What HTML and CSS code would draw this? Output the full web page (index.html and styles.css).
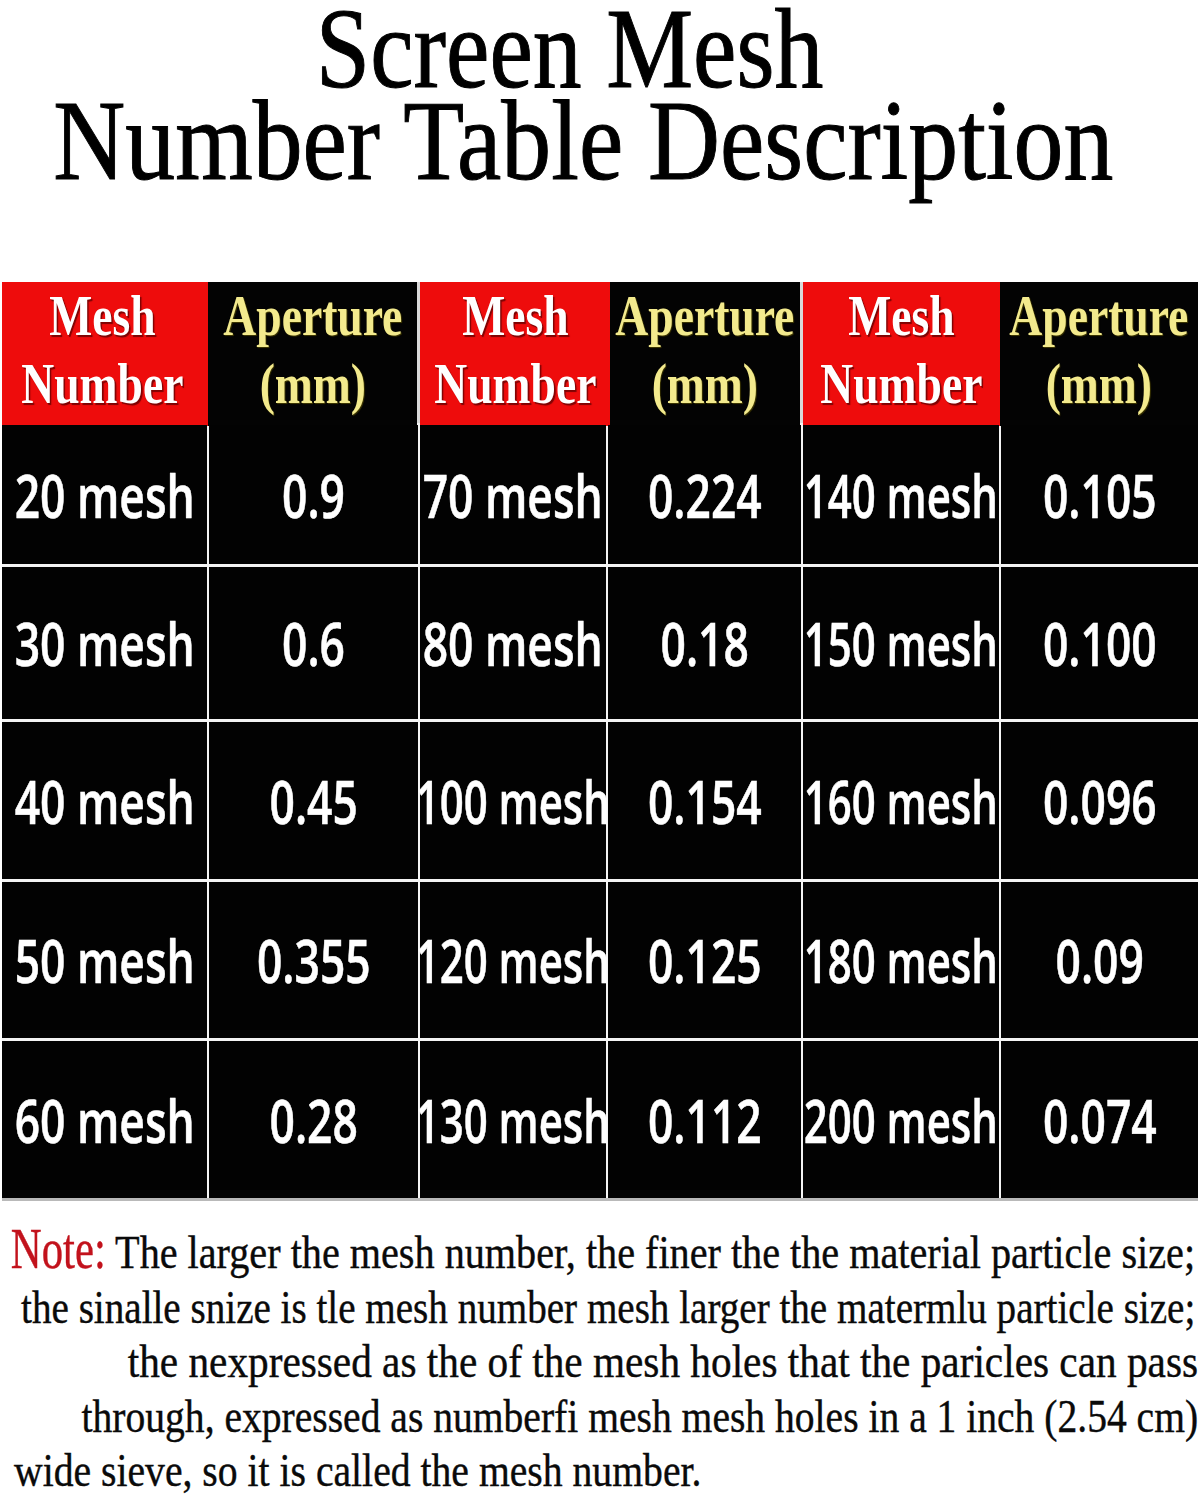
FILE: index.html
```html
<!DOCTYPE html>
<html lang="en">
<head>
<meta charset="utf-8">
<title>Screen Mesh Number Table Description</title>
<link rel="stylesheet" href="styles.css">
</head>
<body>
<div class="page">
  <h1 class="title">
    <span class="title-line t1"><span class="fit-title">Screen Mesh</span></span>
    <span class="title-line t2"><span class="fit-title">Number Table Description</span></span>
  </h1>

  <div class="mesh-table">
    <div class="thead">
      <div class="th red first"><span class="hfit">Mesh<br>Number</span></div>
      <div class="th dark"><span class="hfit">Aperture<br>(mm)</span></div>
      <div class="th red group-start"><span class="hfit">Mesh<br>Number</span></div>
      <div class="th dark"><span class="hfit">Aperture<br>(mm)</span></div>
      <div class="th red group-start"><span class="hfit">Mesh<br>Number</span></div>
      <div class="th dark"><span class="hfit">Aperture<br>(mm)</span></div>
    </div>
    <div class="tbody">
      <div class="td"><span class="bfit">20 mesh</span></div>
      <div class="td"><span class="bfit">0.9</span></div>
      <div class="td"><span class="bfit">70 mesh</span></div>
      <div class="td"><span class="bfit">0.224</span></div>
      <div class="td"><span class="bfit wide">140 mesh</span></div>
      <div class="td"><span class="bfit">0.105</span></div>

      <div class="td"><span class="bfit">30 mesh</span></div>
      <div class="td"><span class="bfit">0.6</span></div>
      <div class="td"><span class="bfit">80 mesh</span></div>
      <div class="td"><span class="bfit">0.18</span></div>
      <div class="td"><span class="bfit wide">150 mesh</span></div>
      <div class="td"><span class="bfit">0.100</span></div>

      <div class="td"><span class="bfit">40 mesh</span></div>
      <div class="td"><span class="bfit">0.45</span></div>
      <div class="td"><span class="bfit wide">100 mesh</span></div>
      <div class="td"><span class="bfit">0.154</span></div>
      <div class="td"><span class="bfit wide">160 mesh</span></div>
      <div class="td"><span class="bfit">0.096</span></div>

      <div class="td"><span class="bfit">50 mesh</span></div>
      <div class="td"><span class="bfit">0.355</span></div>
      <div class="td"><span class="bfit wide">120 mesh</span></div>
      <div class="td"><span class="bfit">0.125</span></div>
      <div class="td"><span class="bfit wide">180 mesh</span></div>
      <div class="td"><span class="bfit">0.09</span></div>

      <div class="td"><span class="bfit">60 mesh</span></div>
      <div class="td"><span class="bfit">0.28</span></div>
      <div class="td"><span class="bfit wide">130 mesh</span></div>
      <div class="td"><span class="bfit">0.112</span></div>
      <div class="td"><span class="bfit wide">200 mesh</span></div>
      <div class="td"><span class="bfit">0.074</span></div>
    </div>
  </div>

  <div class="note">
    <p class="nl nl-right l1"><span class="fit"><span class="note-label">Note:</span> The larger the mesh number, the finer the the material particle size;</span></p>
    <p class="nl nl-right l2"><span class="fit">the sinalle snize is tle mesh number mesh larger the matermlu particle size;</span></p>
    <p class="nl nl-right l3"><span class="fit">the nexpressed as the of the mesh holes that the paricles can pass</span></p>
    <p class="nl nl-right l4"><span class="fit">through, expressed as numberfi mesh mesh holes in a 1 inch (2.54 cm)</span></p>
    <p class="nl nl-left l5"><span class="fit">wide sieve, so it is called the mesh number.</span></p>
  </div>
</div>
</body>
</html>
```

FILE: styles.css
```css
html, body {
  margin: 0;
  padding: 0;
  background: #ffffff;
}

.page {
  width: 1200px;
  height: 1500px;
  overflow: hidden;
  background: #ffffff;
}

/* ---------- Title ---------- */
.title {
  margin: 0;
  padding-top: 3px;
  box-sizing: border-box;
  font-family: "Liberation Serif", "Times New Roman", serif;
  font-weight: 400;
  font-size: 115px;
  line-height: 92px;
  color: #000;
  height: 282px;
}

.title-line {
  display: flex;
  justify-content: center;
  white-space: nowrap;
}

.t1 { padding-right: 60px; }
.t2 { padding-right: 34px; }

.fit-title {
  display: inline-block;
  flex: none;
  transform-origin: center;
  -webkit-text-stroke: 1px #000;
}

.t1 .fit-title { transform: scaleX(0.85); }
.t2 .fit-title { transform: scaleX(0.867); }

/* ---------- Table ---------- */
.mesh-table {
  margin: 0 2px;
  width: 1196px;
}

.thead {
  display: grid;
  grid-template-columns: 206px 209px 193px 190px 200px 198px;
  height: 141px;
  background: #d9d9d9;
}

.th {
  display: flex;
  align-items: center;
  justify-content: center;
  font-family: "Liberation Serif", "Times New Roman", serif;
  font-weight: 700;
  font-size: 57px;
  line-height: 68px;
  text-align: center;
  padding-bottom: 8px;
  box-sizing: border-box;
}

.th.first {
  padding-right: 6px;
}

.th.group-start {
  margin-left: 3px;
}

.th.red {
  background: #ee0c0c;
  color: #ffffff;
  text-shadow: 2px 2px 1px rgba(90, 0, 0, 0.75);
}

.th.dark {
  background: #030303;
  color: #f3ea8d;
  text-shadow: 1px 1px 1px rgba(90, 80, 0, 0.7);
}

.hfit {
  display: inline-block;
  white-space: nowrap;
  transform: scaleX(0.8);
  transform-origin: center;
}

.tbody {
  display: grid;
  grid-template-columns: 205px 209px 186px 193px 196px 197px;
  grid-template-rows: 139px 152px 157px 156px 157px;
  column-gap: 2px;
  row-gap: 3px;
  background: #f4f4f4;
  border-top: 2px solid #f4f4f4;
  border-bottom: 3px solid #b9b9b9;
}

.td {
  background: #020202;
  color: #ffffff;
  display: flex;
  align-items: center;
  justify-content: center;
  font-family: "Open Sans", "DejaVu Sans", sans-serif;
  font-weight: 600;
  font-size: 60px;
  line-height: 1;
  -webkit-text-stroke: 0.6px #ffffff;
}

.bfit {
  display: inline-block;
  flex: none;
  white-space: nowrap;
  transform: scaleX(0.74);
  transform-origin: center;
}

.bfit.wide {
  transform: scaleX(0.7);
}

/* ---------- Note ---------- */
.note {
  margin-top: 24px;
  font-family: "Liberation Serif", "Times New Roman", serif;
  font-size: 47px;
  line-height: 54.5px;
  color: #0a0a0a;
  -webkit-text-stroke: 0.4px #0a0a0a;
}

.nl {
  margin: 0;
  display: flex;
  white-space: nowrap;
}

.nl-right {
  justify-content: flex-end;
}

.nl-left {
  justify-content: flex-start;
  padding-left: 14px;
}

.l1, .l2 { padding-right: 5px; }
.l3, .l4 { padding-right: 2px; }

.fit {
  display: inline-block;
  flex: none;
  transform-origin: right center;
}

.nl-left .fit {
  transform-origin: left center;
}

.l1 .fit { transform: scaleX(0.855); }
.l2 .fit { transform: scaleX(0.832); }
.l3 .fit { transform: scaleX(0.878); }
.l4 .fit { transform: scaleX(0.842); }
.l5 .fit { transform: scaleX(0.844); }

.note-label {
  display: inline-block;
  font-size: 57px;
  line-height: 40px;
  color: #c2121c;
  -webkit-text-stroke: 0.4px #c2121c;
  transform: scaleX(0.877);
  transform-origin: left center;
  margin-right: -15.6px;
}
```
